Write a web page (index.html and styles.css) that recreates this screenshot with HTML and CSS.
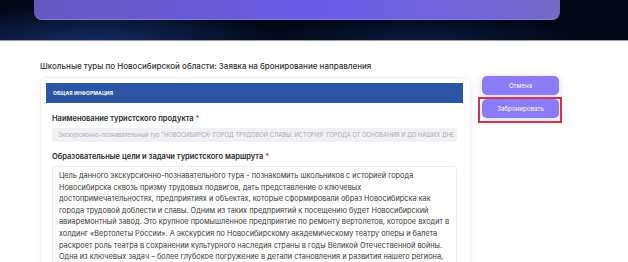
FILE: index.html
```html
<!DOCTYPE html>
<html>

<head>
    <link rel="stylesheet" href="styles.css">
</head>

<body>
    <div class="hero">
        <div class="hero-card"></div>
    </div>
    <div class="page">
        <h1 class="page-title">Школьные туры по Новосибирской области: Заявка на бронирование направления</h1>
        <div class="content">
            <div class="card">
                <div class="card-header">ОБЩАЯ ИНФОРМАЦИЯ</div>
                <div class="card-body">
                    <div class="field">
                        <label class="field-label">Наименование туристского продукта <span class="req">*</span></label>
                        <div class="field-input">Экскурсионно-познавательный тур "НОВОСИБИРСК- ГОРОД ТРУДОВОЙ СЛАВЫ. ИСТОРИЯ&nbsp; ГОРОДА ОТ ОСНОВАНИЯ И ДО НАШИХ ДНЕ</div>
                    </div>
                    <div class="field">
                        <label class="field-label">Образовательные цели и задачи туристского маршрута <span class="req">*</span></label>
                        <div class="field-text">
                            Цель данного экскурсионно-познавательного тура - познакомить школьников с историей города<br>
                            Новосибирска сквозь призму трудовых подвигов, дать представление о ключевых<br>
                            достопримечательностях, предприятиях и объектах, которые сформировали образ Новосибирска как<br>
                            города трудовой доблести и славы. Одним из таких предприятий к посещению будет Новосибирский<br>
                            авиаремонтный завод. Это крупное промышленное предприятие по ремонту вертолетов, которое входит в<br>
                            холдинг «Вертолеты России». А экскурсия по Новосибирскому академическому театру оперы и балета<br>
                            раскроет роль театра в сохранении культурного наследия страны в годы Великой Отечественной войны.<br>
                            Одна из ключевых задач – более глубокое погружение в детали становления и развития нашего региона,
                        </div>
                    </div>
                </div>
            </div>
            <div class="actions">
                <button class="btn">Отмена</button>
                <div class="highlight">
                    <button class="btn">Забронировать</button>
                </div>
            </div>
        </div>
    </div>
</body>

</html>
```

FILE: styles.css
```css
body {
    margin: 0;
    font-family: Inter, "Noto Sans", sans-serif;
    background-color: #fff;
    color: #222;
    overflow: hidden;
}

.hero {
    height: 40px;
    background:
        radial-gradient(ellipse 190px 38px at 95px 42px, rgba(22, 52, 112, 0.85), transparent),
        radial-gradient(ellipse 160px 30px at 420px 42px, rgba(20, 40, 92, 0.6), transparent),
        #020716;
    border-bottom: 1px solid #9a9aa6;
}

.hero-card {
    height: 20px;
    margin: 0 68px 0 34px;
    border-radius: 0 0 8px 8px;
    background: linear-gradient(90deg, #6558c0 0%, #6a5ad8 35%, #6c5ce8 55%, #7466d6 85%, #7569c6 100%);
    border-bottom: 1px solid #8c82d8;
    box-sizing: border-box;
}

.page {
    padding: 19px 0 0 40px;
}

.page-title {
    margin: 0 0 5px;
    font-size: 8px;
    font-weight: 500;
    line-height: 12px;
    color: #333;
}

.content {
    display: flex;
    align-items: flex-start;
}

.card {
    width: 431px;
    height: 200px;
    box-sizing: border-box;
    padding: 5px 7px 0 5px;
    background-color: #fff;
    border: 1px solid #efeff4;
    border-radius: 8px;
    box-shadow: 0 0 6px rgba(60, 60, 110, 0.06);
}

.card-header {
    height: 20px;
    line-height: 20px;
    padding-left: 7px;
    background-color: #2c55a5;
    color: #fff;
    font-size: 5px;
    font-weight: 700;
    letter-spacing: 0.1px;
}

.card-body {
    padding: 10px 6px 0;
}

.field {
    margin-bottom: 9px;
}

.field-label {
    display: block;
    font-size: 7.5px;
    font-weight: 600;
    line-height: 11px;
    color: #2a2a2a;
    margin-bottom: 4px;
}

.req {
    color: #e0303a;
}

.field-input {
    height: 14px;
    line-height: 14px;
    padding: 0 4px 0 6px;
    background-color: #f1f1f4;
    border-radius: 3px;
    color: #a9a9b2;
    font-size: 5.8px;
    white-space: nowrap;
    overflow: hidden;
}

.field-text {
    margin-top: 4px;
    padding: 3px 6px 4px;
    border: 1px solid #ececf0;
    border-radius: 4px;
    font-size: 7.35px;
    line-height: 11.6px;
    color: #383838;
    white-space: nowrap;
    overflow: hidden;
}

.actions {
    display: flex;
    flex-direction: column;
    margin: -1px 0 0 11px;
    width: 77px;
}

.btn {
    display: block;
    width: 77px;
    height: 19px;
    border: none;
    border-radius: 5px;
    background-color: #8a7cf7;
    color: #fff;
    font-family: Inter, sans-serif;
    font-size: 6.2px;
    cursor: pointer;
    box-shadow: 0 2px 8px rgba(138, 124, 247, 0.35);
}

.highlight {
    margin: 2px -3px 0 -4px;
    padding: 0 1px 3px 2px;
    border: 2px solid #d9303a;
}
```
